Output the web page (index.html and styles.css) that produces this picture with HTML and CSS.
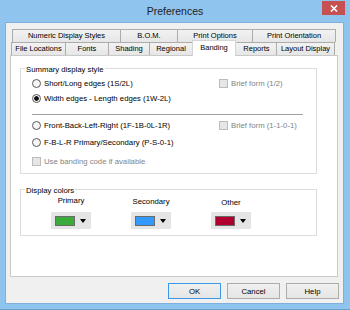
FILE: index.html
```html
<!DOCTYPE html>
<html lang="en">
<head>
    <meta charset="UTF-8">
    <title>Preferences</title>
    <link rel="stylesheet" href="styles.css">
</head>
<body>
    <div class="window">
        <div class="titlebar">
            <span class="title">Preferences</span>
            <button class="close">
                <svg width="8" height="7" viewBox="0 0 8 7"><path d="M1 0.5 L7 6.5 M7 0.5 L1 6.5" stroke="#fff" stroke-width="1.6"/></svg>
            </button>
        </div>
        <div class="client">
            <div class="tabs">
                <div class="tab-row back">
                    <div class="tab tab-numeric">Numeric Display Styles</div>
                    <div class="tab tab-bom">B.O.M.</div>
                    <div class="tab tab-print">Print Options</div>
                    <div class="tab tab-orient">Print Orientation</div>
                </div>
                <div class="tab-row front">
                    <div class="tab tab-files">File Locations</div>
                    <div class="tab tab-fonts">Fonts</div>
                    <div class="tab tab-shading">Shading</div>
                    <div class="tab tab-regional">Regional</div>
                    <div class="tab tab-banding active">Banding</div>
                    <div class="tab tab-reports">Reports</div>
                    <div class="tab tab-layout">Layout Display</div>
                </div>
                <div class="panel">
                    <div class="group summary">
                        <span class="group-title">Summary display style</span>
                        <div class="options">
                            <div class="opt-row">
                                <div class="opt-main"><span class="radio"></span>Short/Long edges (1S/2L)</div>
                                <div class="opt-side disabled"><span class="check"></span>Brief form (1/2)</div>
                            </div>
                            <div class="opt-row">
                                <div class="opt-main"><span class="radio checked"></span>Width edges - Length edges (1W-2L)</div>
                            </div>
                            <div class="separator"></div>
                            <div class="opt-row">
                                <div class="opt-main"><span class="radio"></span>Front-Back-Left-Right (1F-1B-0L-1R)</div>
                                <div class="opt-side disabled"><span class="check"></span>Brief form (1-1-0-1)</div>
                            </div>
                            <div class="opt-row gap2">
                                <div class="opt-main"><span class="radio"></span>F-B-L-R Primary/Secondary (P-S-0-1)</div>
                            </div>
                            <div class="opt-row gap4">
                                <div class="opt-main disabled"><span class="check"></span>Use banding code if available</div>
                            </div>
                        </div>
                    </div>

                    <div class="group colors">
                        <span class="group-title">Display colors</span>
                        <div class="swatches">
                            <div class="swatch-col">
                                <span class="swatch-label">Primary</span>
                                <div class="color-btn"><span class="swatch green"></span><span class="arrow"></span></div>
                            </div>
                            <div class="swatch-col">
                                <span class="swatch-label lower">Secondary</span>
                                <div class="color-btn"><span class="swatch blue"></span><span class="arrow"></span></div>
                            </div>
                            <div class="swatch-col">
                                <span class="swatch-label lowest">Other</span>
                                <div class="color-btn"><span class="swatch red"></span><span class="arrow"></span></div>
                            </div>
                        </div>
                    </div>
                </div>
            </div>
            <div class="actions">
                <button class="btn default">OK</button>
                <button class="btn">Cancel</button>
                <button class="btn">Help</button>
            </div>
        </div>
    </div>
</body>
</html>
```

FILE: styles.css
```css
* {
    box-sizing: border-box;
}
body {
    margin: 0;
    font-family: "Liberation Sans", Arial, sans-serif;
    font-size: 7.75px;
    color: #000;
}
.window {
    width: 350px;
    height: 310px;
    background-color: #8fc4ef;
    border-bottom: 1px solid #6f9fcf;
    display: flex;
    flex-direction: column;
}
.titlebar {
    height: 22px;
    flex: none;
    display: grid;
    grid-template-columns: 1fr auto 1fr;
    align-items: center;
}
.title {
    grid-column: 2;
    font-size: 10.5px;
    line-height: 22px;
    color: #222;
}
.close {
    grid-column: 3;
    justify-self: end;
    align-self: start;
    width: 23px;
    height: 14px;
    margin: 1px 5px 0 0;
    padding: 0;
    border: none;
    background-color: #c75050;
    display: flex;
    align-items: center;
    justify-content: center;
}
.client {
    flex: 1;
    margin: 0 6px 5px 5px;
    padding: 6px 4px 0 4px;
    background-color: #f0f0f0;
    border: 1px solid #7fb0dd;
}

/* tabs */
.tabs {
    width: 328px;
}
.tab-row {
    display: flex;
    height: 13px;
}
.tab-row.back {
    padding-left: 2px;
}
.tab-row.front {
    padding-left: 1px;
}
.tab {
    height: 13px;
    border: 1px solid #acacac;
    border-bottom: none;
    border-right: none;
    background: linear-gradient(#f2f2f2, #e6e6e6);
    font-size: 7.5px;
    line-height: 12px;
    text-align: center;
    white-space: nowrap;
}
.tab:last-child {
    border-right: 1px solid #acacac;
}
.tab.active {
    position: relative;
    z-index: 1;
    height: 16px;
    margin: -2px 0 -1px;
    border: 1px solid #d4d4d4;
    border-bottom: none;
    background: #fff;
    line-height: 14px;
}
.tab.active + .tab {
    border-left-color: transparent;
}
.tab-numeric { width: 108px; }
.tab-bom { width: 57px; }
.tab-print { width: 75px; }
.tab-orient { width: 84px; }
.tab-files { width: 54px; }
.tab-fonts { width: 43px; }
.tab-shading { width: 41px; }
.tab-regional { width: 43px; }
.tab-banding { width: 44px; }
.tab-reports { width: 40px; }
.tab-layout { width: 59px; }

.panel {
    height: 222px;
    padding: 12px 0 0 9px;
    background-color: #fff;
    border: 1px solid #c9c9c9;
}

/* group boxes */
.group {
    width: 297px;
    border: 1px solid #dcdcdc;
}
.group.summary {
    height: 106px;
}
.group.colors {
    height: 47px;
    margin-top: 15px;
}
.group-title {
    display: block;
    width: max-content;
    margin: -4px 0 0 4px;
    padding: 0 1px;
    background-color: #fff;
    line-height: 10px;
}
.options {
    padding-left: 11px;
    margin-top: 1px;
}
.opt-row {
    display: flex;
    align-items: center;
    height: 15px;
}
.opt-row.gap2 {
    margin-top: 2px;
}
.opt-row.gap4 {
    margin-top: 4px;
}
.opt-main {
    display: flex;
    align-items: center;
    width: 187px;
    white-space: nowrap;
}
.opt-side {
    display: flex;
    align-items: center;
    white-space: nowrap;
}
.radio {
    flex: none;
    width: 9px;
    height: 9px;
    margin-right: 3px;
    border: 1px solid #5a5a5a;
    border-radius: 50%;
    background-color: #f6f6f6;
}
.radio.checked {
    background: radial-gradient(circle, #111 0 2px, #f6f6f6 2.6px);
}
.check {
    flex: none;
    width: 9px;
    height: 9px;
    margin-right: 3px;
    border: 1px solid #bcbcbc;
    background-color: #e6e6e6;
}
.disabled {
    color: #838383;
}
.separator {
    width: 271px;
    height: 1px;
    margin: 8px 0 3px;
    background-color: #a0a0a0;
}

/* colors */
.swatches {
    display: flex;
    gap: 40px;
    padding-left: 30px;
}
.swatch-col {
    width: 40px;
    display: flex;
    flex-direction: column;
    align-items: center;
}
.swatch-label {
    height: 16px;
    line-height: 10px;
    white-space: nowrap;
}
.swatch-label.lower {
    padding-top: 1px;
}
.swatch-label.lowest {
    padding-top: 2px;
}
.color-btn {
    width: 40px;
    height: 17px;
    padding-left: 4px;
    display: flex;
    align-items: center;
    gap: 5px;
    background-color: #e5e5e5;
}
.swatch {
    width: 20px;
    height: 10px;
    border: 1px solid #6a6a6a;
}
.swatch.green { background-color: #3aaa3a; }
.swatch.blue { background-color: #3399ff; }
.swatch.red { background-color: #b0002e; }
.arrow {
    width: 0;
    height: 0;
    border-left: 3.5px solid transparent;
    border-right: 3.5px solid transparent;
    border-top: 4px solid #000;
}

/* dialog buttons */
.actions {
    display: flex;
    justify-content: flex-end;
    gap: 6px;
    margin-top: 6px;
}
.btn {
    width: 53px;
    height: 16px;
    padding: 0;
    border: 1px solid #acacac;
    background: linear-gradient(#f0f0f0, #e5e5e5);
    font-family: inherit;
    font-size: 7.75px;
    color: #000;
}
.btn.default {
    border-color: #3c98e6;
}
```
